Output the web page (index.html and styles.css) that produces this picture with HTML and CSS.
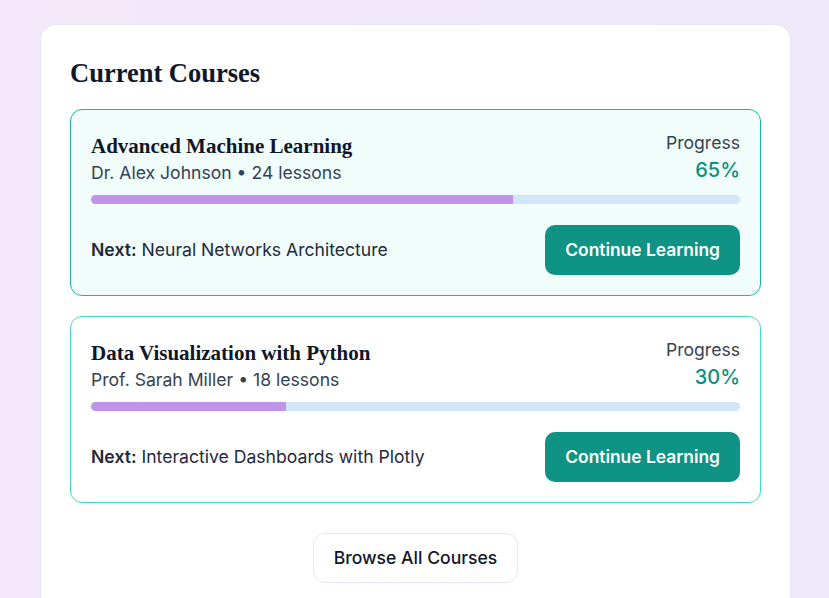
FILE: index.html
```html
<!DOCTYPE html>
<html lang="en">
<head>
<meta charset="utf-8">
<title>Current Courses</title>
<link rel="stylesheet" href="styles.css">
</head>
<body>
  <main class="panel">
    <h2 class="panel-title">Current Courses</h2>

    <section class="course course-active">
      <div class="course-head">
        <div class="course-info">
          <h3 class="course-name">Advanced Machine Learning</h3>
          <p class="course-meta">Dr. Alex Johnson • 24 lessons</p>
        </div>
        <div class="course-progress">
          <div class="progress-label">Progress</div>
          <div class="progress-value">65%</div>
        </div>
      </div>
      <div class="bar"><div class="bar-fill" style="width:65%"></div></div>
      <div class="course-foot">
        <p class="next"><strong>Next:</strong> Neural Networks Architecture</p>
        <button class="btn-continue">Continue Learning</button>
      </div>
    </section>

    <section class="course">
      <div class="course-head">
        <div class="course-info">
          <h3 class="course-name">Data Visualization with Python</h3>
          <p class="course-meta">Prof. Sarah Miller • 18 lessons</p>
        </div>
        <div class="course-progress">
          <div class="progress-label">Progress</div>
          <div class="progress-value">30%</div>
        </div>
      </div>
      <div class="bar"><div class="bar-fill" style="width:30%"></div></div>
      <div class="course-foot">
        <p class="next"><strong>Next:</strong> Interactive Dashboards with Plotly</p>
        <button class="btn-continue">Continue Learning</button>
      </div>
    </section>

    <div class="browse-row">
      <button class="btn-browse">Browse All Courses</button>
    </div>
  </main>
</body>
</html>
```

FILE: styles.css
```css
* { box-sizing: border-box; }

html, body { height: 100%; }

body {
  margin: 0;
  padding: 24px 38px 0 40px;
  background: linear-gradient(90deg, #f5e8fa 0%, #f1e9f9 55%, #ede9f9 100%);
  font-family: Inter, "Noto Sans", sans-serif;
  overflow: hidden;
}

.panel {
  background: #ffffff;
  border: 1px solid #ebe5f2;
  border-radius: 16px;
  padding: 29px 29px 30px;
}

.panel-title {
  margin: 0 0 17px;
  font-family: "Liberation Serif", "Times New Roman", serif;
  font-weight: 700;
  font-size: 26.5px;
  line-height: 38px;
  color: #0f172a;
}

.course {
  border: 1px solid #40dcc8;
  border-radius: 12px;
  padding: 22px 20px 20px;
  background: #ffffff;
  margin-bottom: 20px;
}

.course-active {
  background: #f0fdfa;
  border-color: #1fb5a2;
}

.course-head {
  display: flex;
  justify-content: space-between;
  align-items: flex-start;
  margin-bottom: 10px;
}

.course-name {
  margin: 0;
  font-family: "Liberation Serif", "Times New Roman", serif;
  font-weight: 700;
  font-size: 21px;
  line-height: 28px;
  color: #0f172a;
}

.course-meta {
  margin: 1px 0 0;
  font-size: 17.6px;
  line-height: 24px;
  color: #334155;
}

.course-progress {
  text-align: right;
}

.progress-label {
  font-size: 17.6px;
  line-height: 22px;
  color: #374151;
}

.progress-value {
  margin-top: 2px;
  font-size: 20px;
  line-height: 28px;
  font-weight: 500;
  color: #0d8f80;
}

.bar {
  height: 9px;
  border-radius: 5px;
  background: #d3e5f9;
  overflow: hidden;
  margin-bottom: 21px;
}

.bar-fill {
  height: 100%;
  background: #c194ec;
}

.course-foot {
  display: flex;
  justify-content: space-between;
  align-items: center;
}

.next {
  margin: 0;
  font-size: 17.6px;
  line-height: 24px;
  color: #1e293b;
}

.next strong {
  font-weight: 600;
}

.btn-continue {
  font-family: Inter, "Noto Sans", sans-serif;
  font-size: 17.4px;
  font-weight: 600;
  line-height: 21px;
  padding: 14px 20px 15px;
  border: 0;
  border-radius: 10px;
  background: #0e9384;
  color: #ffffff;
}

.browse-row {
  display: flex;
  justify-content: center;
  margin-top: 30px;
}

.btn-browse {
  font-family: Inter, "Noto Sans", sans-serif;
  font-size: 17.6px;
  font-weight: 500;
  line-height: 22px;
  padding: 13px 20px;
  border: 1px solid #e2e8f0;
  border-radius: 12px;
  background: #ffffff;
  color: #0f172a;
}
```
